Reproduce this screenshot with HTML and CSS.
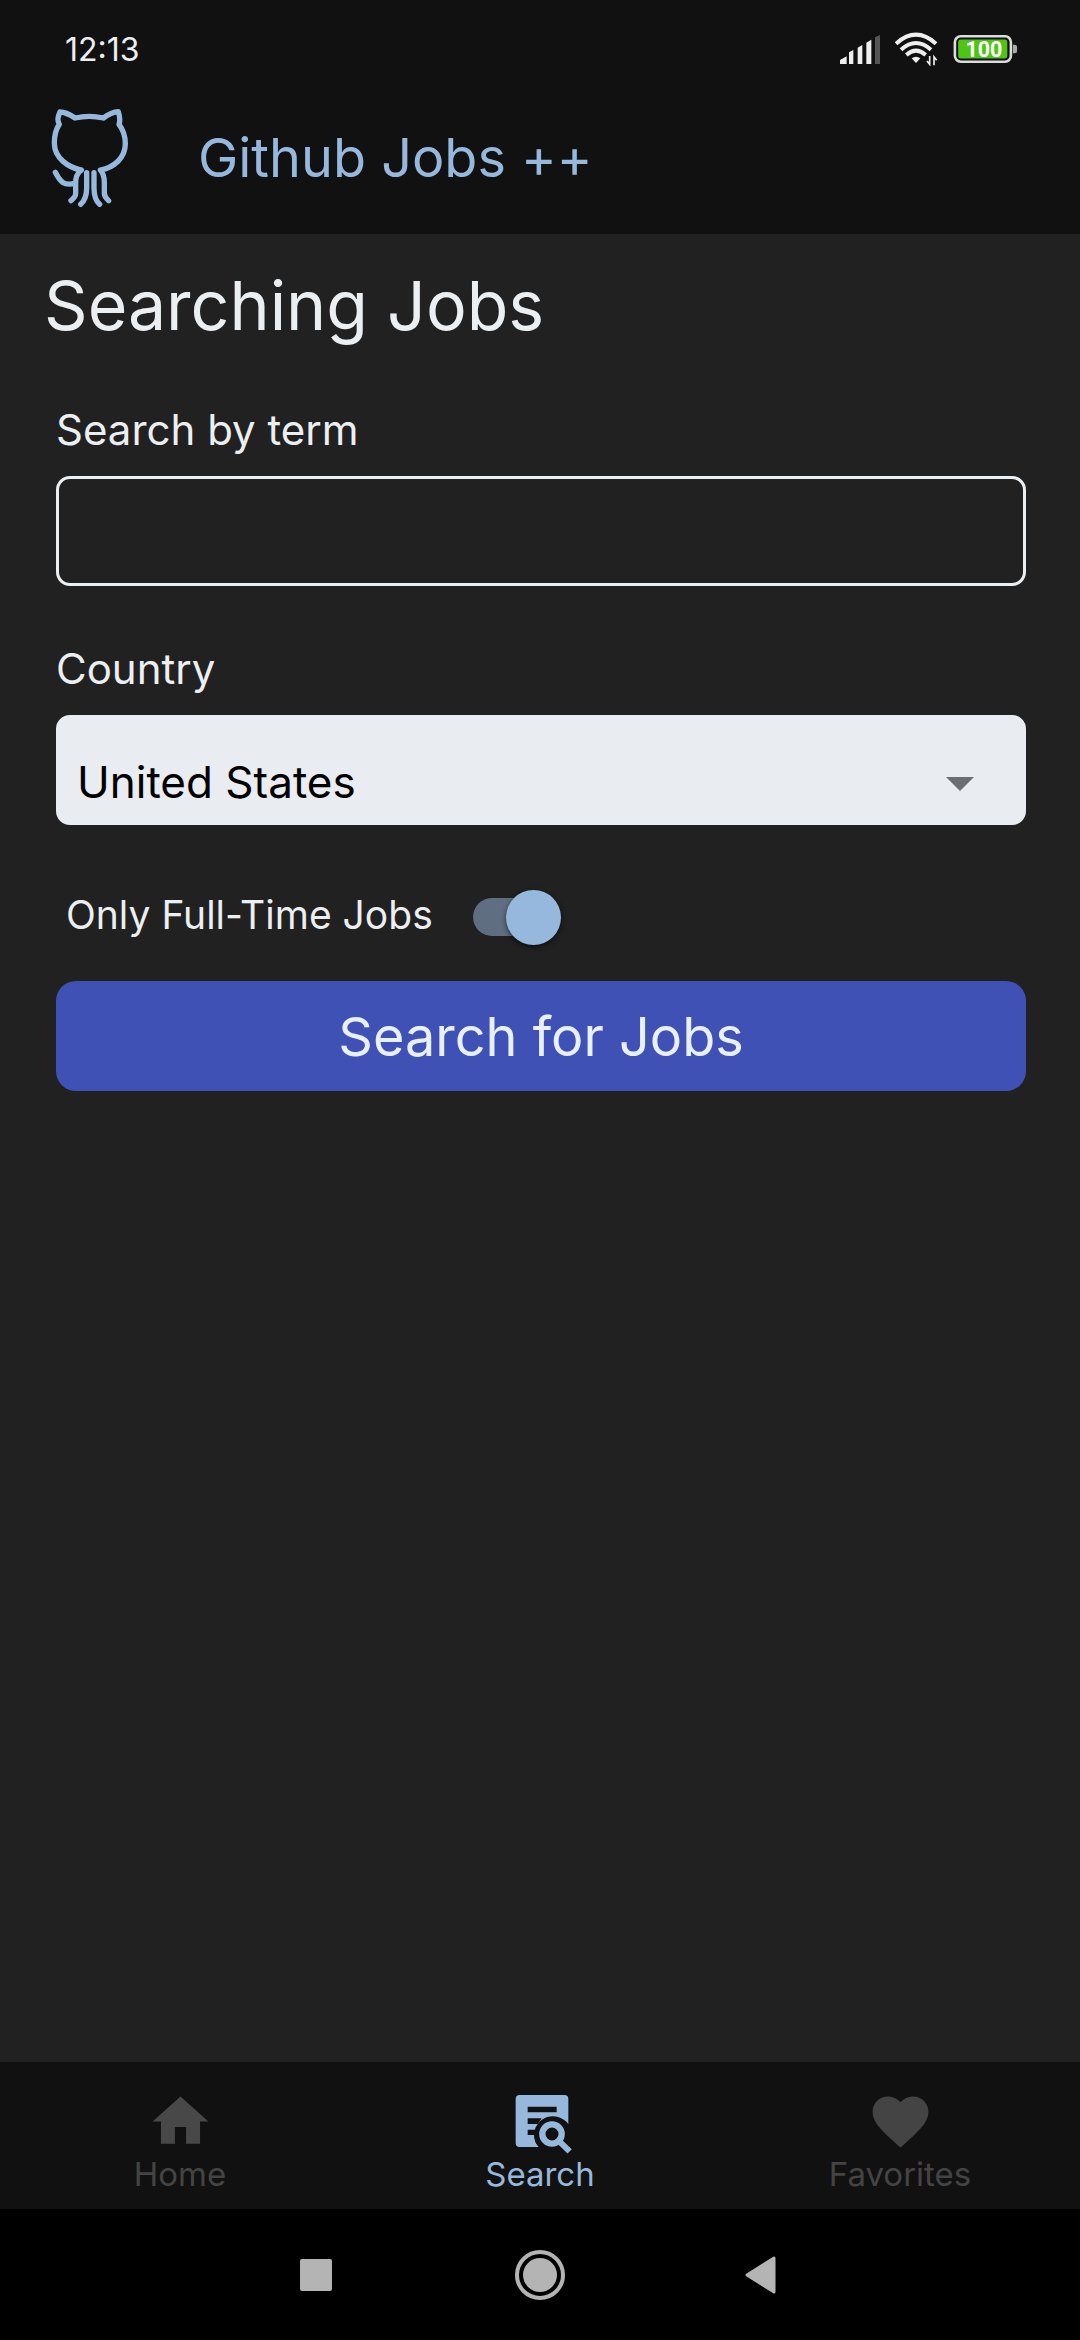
FILE: index.html
```html
<!DOCTYPE html>
<html lang="en">
<head>
<meta charset="utf-8">
<meta name="viewport" content="width=device-width, initial-scale=1">
<title>Github Jobs ++</title>
<link rel="stylesheet" href="styles.css">
</head>
<body class="screen">
  <div class="status-bar">
    <span class="clock">12:13</span>
    <div class="status-icons">
      <svg class="signal" viewBox="57 42 120 87" aria-hidden="true">
        <path d="M57 129v-12l20-11v23zM84 129V94l13-7v42zM110 129V80l14-8v57zM136 129V65l15-9v73z" fill="#efefef"/>
        <path d="M162 129V49l15-7v87z" fill="#555"/>
      </svg>
      <svg class="wifi" viewBox="225 40 129 102" fill="none" stroke="#efefef" stroke-width="12" aria-hidden="true">
        <path d="M228 75Q288 21 348 75M243 93Q288 53 333 93M259 109Q288 83 317 109"/>
        <path d="M288 133l-13-14q13-10 26 0z" fill="#efefef" stroke="none"/>
        <path d="M329 112v25l-8-10M342 140v-25l8 10" stroke-width="5"/>
      </svg>
      <svg class="battery" viewBox="397 42 196 86" aria-hidden="true">
        <rect x="401" y="46" width="172" height="78" rx="18" fill="#111" stroke="#dcdcdc" stroke-width="8"/>
        <rect x="411" y="56" width="151" height="58" rx="8" fill="#4fc414"/>
        <path d="M579 72h6q7 0 7 7v12q0 7-7 7h-6z" fill="#aaa"/>
        <text class="charge" x="490" y="109" text-anchor="middle">100</text>
      </svg>
    </div>
  </div>

  <header class="app-bar">
    <svg class="logo" viewBox="60 50 240 306" aria-hidden="true">
      <path d="M154 239C116 232 73 204 73 158C73 132 79 115 88 102C82 92 84 77 90 65C105 65 120 73 135 83Q178 73 220 83C235 72 250 65 265 64C269 77 272 90 267 102C280 119 286 137 286 160C286 204 250 232 211 239C221 250 223 260 223 276V309Q223 320 236 331M154 239C139 251 137 262 137 280V309Q137 320 123 331M135 279C101 287 91 275 76 246M170 247V292C170 321 162 333 152 342M192 247V292C192 321 199 333 209 342" fill="none" stroke="#97b8dd" stroke-width="16" stroke-linecap="round" stroke-linejoin="round"/>
    </svg>
    <span class="app-name">Github Jobs ++</span>
  </header>

  <main class="content">
    <h1 class="title">Searching Jobs</h1>
    <form class="form">
      <div class="field">
        <label class="label" for="term">Search by term</label>
        <input class="control" id="term" type="text">
      </div>
      <div class="field">
        <label class="label" for="country">Country</label>
        <div class="picker">
          <select class="control select" id="country"><option>United States</option></select>
          <svg class="caret" viewBox="0 0 28 14" aria-hidden="true"><path d="M0 0h28L14 14z" fill="#6b6f73"/></svg>
        </div>
      </div>
      <div class="switch-row">
        <label class="switch-label" for="fulltime">Only Full-Time Jobs</label>
        <input class="switch" id="fulltime" type="checkbox" checked>
      </div>
      <button class="submit" type="button">Search for Jobs</button>
    </form>
  </main>

  <nav class="tabs">
    <a class="tab" href="#home">
      <svg class="tab-icon" viewBox="0 0 24 24" aria-hidden="true"><path d="M10 20v-6h4v6h5v-8h3L12 3 2 12h3v8z" fill="#484848"/></svg>
      Home
    </a>
    <a class="tab active" href="#search">
      <svg class="tab-icon" viewBox="79 54 201 201" aria-hidden="true">
        <path d="M117 75H251Q263 75 263 87V162A57 57 0 0 0 160 195Q160 216 174 231H117Q105 231 105 219V87Q105 75 117 75z" fill="#97b8dd"/>
        <path d="M141 110h87v17h-87zM141 145h42l-12 17h-30zM141 179h22v16h-22z" fill="#111"/>
        <circle cx="214" cy="192" r="29" fill="none" stroke="#97b8dd" stroke-width="19"/>
        <path d="M236 214l31 30" stroke="#97b8dd" stroke-width="18"/>
      </svg>
      Search
    </a>
    <a class="tab" href="#favorites">
      <svg class="tab-icon" viewBox="0 0 24 24" aria-hidden="true"><path d="M12 21.35l-1.45-1.32C5.4 15.36 2 12.28 2 8.5 2 5.42 4.42 3 7.5 3c1.74 0 3.41.81 4.5 2.09C13.09 3.81 14.76 3 16.5 3 19.58 3 22 5.42 22 8.5c0 3.78-3.4 6.86-8.55 11.54z" fill="#444"/></svg>
      Favorites
    </a>
  </nav>

  <div class="system-nav">
    <button class="key" type="button" aria-label="Recent apps"><svg viewBox="0 0 50 50"><rect x="9" y="9" width="32" height="32" rx="2" fill="#b4b4b4"/></svg></button>
    <button class="key" type="button" aria-label="Home"><svg viewBox="0 0 50 50"><circle cx="25" cy="25" r="23" fill="none" stroke="#b4b4b4" stroke-width="4"/><circle cx="25" cy="25" r="17" fill="#b4b4b4"/></svg></button>
    <button class="key" type="button" aria-label="Back"><svg viewBox="0 0 50 50"><path d="M8 25L35 8V42z" fill="#b4b4b4" stroke="#b4b4b4" stroke-width="3" stroke-linejoin="round"/></svg></button>
  </div>
</body>
</html>
```
FILE: styles.css
```css
* {
  box-sizing: border-box;
}

.screen {
  margin: 0;
  min-height: 100vh;
  display: flex;
  flex-direction: column;
  background: #212121;
  color: #eceff1;
  font-family: Inter, "Open Sans", sans-serif;
}

.status-bar {
  display: flex;
  justify-content: space-between;
  align-items: center;
  height: 98px;
  padding: 0 62px 0 65px;
  background: #111;
}

.clock {
  padding-top: 2px;
  font-size: 32px;
  line-height: 40px;
}

.status-icons {
  display: flex;
  align-items: center;
  gap: 15px;
}

.signal {
  width: 40px;
  height: 29px;
}

.wifi {
  width: 43px;
  height: 34px;
}

.battery {
  width: 65px;
  height: 28px;
}

.charge {
  font-family: Roboto, sans-serif;
  font-size: 66px;
  font-weight: 700;
  fill: #fff;
}

.app-bar {
  display: flex;
  align-items: center;
  gap: 68px;
  height: 136px;
  padding: 0 50px 16px;
  background: #111;
  color: #97b8dd;
}

.logo {
  width: 80px;
  height: 102px;
}

.app-name {
  font-size: 54px;
  line-height: 68px;
}

.content {
  flex: 1;
  padding: 29px 44px;
}

.title {
  margin: 0;
  font-size: 68px;
  font-weight: 400;
  line-height: 84px;
}

.form {
  display: flex;
  flex-direction: column;
  padding: 55px 10px 0 12px;
}

.field {
  display: flex;
  flex-direction: column;
  gap: 18px;
  margin-bottom: 55px;
}

.label {
  font-size: 42px;
  line-height: 56px;
}

.control {
  width: 100%;
  height: 110px;
  padding: 0 24px;
  border: 3px solid #eceff1;
  border-radius: 14px;
  background: none;
  color: inherit;
  font: inherit;
  font-size: 44px;
}

.picker {
  display: grid;
  align-items: center;
}

.select {
  grid-area: 1 / 1;
  padding: 24px 18px 0;
  border-color: #e9ecf1;
  background: #e9ecf1;
  color: #000;
  appearance: none;
}

.caret {
  grid-area: 1 / 1;
  justify-self: end;
  width: 28px;
  height: 14px;
  margin: 28px 52px 0 0;
  pointer-events: none;
}

.switch-row {
  display: flex;
  align-items: flex-start;
  gap: 40px;
  height: 56px;
  margin: 9px 0 36px;
  padding-left: 10px;
}

.switch-label {
  font-size: 39px;
  line-height: 52px;
}

.switch {
  appearance: none;
  display: grid;
  align-items: center;
  width: 88px;
  height: 56px;
  margin: 0;
}

.switch::before,
.switch::after {
  content: "";
  grid-area: 1 / 1;
}

.switch::before {
  width: 80px;
  height: 38px;
  border-radius: 19px;
  background: #5f6e80;
}

.switch::after {
  justify-self: end;
  width: 55px;
  height: 55px;
  border-radius: 50%;
  background: #97b8dd;
  box-shadow: 0 2px 5px rgba(0, 0, 0, 0.6);
}

.submit {
  height: 110px;
  border: 0;
  border-radius: 20px;
  background: #3f51b5;
  color: #e8efff;
  font: inherit;
  font-size: 54px;
}

.tabs {
  display: flex;
  height: 147px;
  padding: 26px 0 16px;
  background: #111;
}

.tab {
  flex: 1;
  display: flex;
  flex-direction: column;
  align-items: center;
  color: #444;
  font-size: 33px;
  line-height: 38px;
  text-decoration: none;
}

.active {
  color: #97b8dd;
}

.tab-icon {
  width: 67px;
  height: 67px;
}

.system-nav {
  display: flex;
  justify-content: center;
  align-items: center;
  gap: 174px;
  height: 131px;
  background: #000;
}

.key {
  width: 50px;
  height: 50px;
  padding: 0;
  border: 0;
  background: none;
}

.key svg {
  display: block;
}
```
